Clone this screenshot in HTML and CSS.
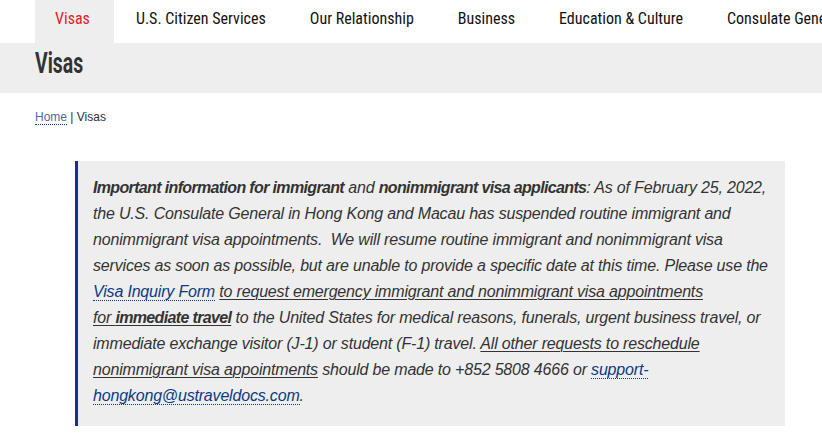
FILE: index.html
```html
<!DOCTYPE html>
<html lang="en">
<head>
    <meta charset="UTF-8">
    <meta name="viewport" content="width=device-width, initial-scale=1.0">
    <title>Visas</title>
    <link rel="stylesheet" href="styles.css">
</head>
<body>
    <nav class="main-nav">
        <a class="nav-item active" href="#">Visas</a>
        <a class="nav-item" href="#">U.S. Citizen Services</a>
        <a class="nav-item" href="#">Our Relationship</a>
        <a class="nav-item" href="#">Business</a>
        <a class="nav-item" href="#">Education &amp; Culture</a>
        <a class="nav-item" href="#">Consulate General</a>
    </nav>

    <header class="page-header">
        <h1 class="page-title">Visas</h1>
    </header>

    <div class="content">
        <p class="breadcrumb"><a href="#">Home</a> | Visas</p>

        <blockquote class="notice">
            <p><strong>Important information for immigrant</strong> and <strong>nonimmigrant visa applicants</strong>: As of February 25, 2022, the U.S. Consulate General in Hong Kong and Macau has suspended routine immigrant and nonimmigrant visa appointments.&nbsp; We will resume routine immigrant and nonimmigrant visa services as soon as possible, but are unable to provide a specific date at this time. Please use the <a class="link" href="#">Visa Inquiry Form</a> <u>to request emergency immigrant and nonimmigrant visa appointments for&nbsp;<strong>immediate travel</strong></u> to the United States for medical reasons, funerals, urgent business travel, or immediate exchange visitor (J-1) or student (F-1) travel. <u>All other requests to reschedule nonimmigrant visa appointments</u> should be made to +852 5808 4666 or <a class="link" href="#">support-hongkong@ustraveldocs.com</a>.</p>
        </blockquote>
    </div>
</body>
</html>
```

FILE: styles.css
```css
body {
    margin: 0;
    padding: 0;
    font-family: Roboto, Arial, sans-serif;
    color: #333;
    background: #fff;
    overflow: hidden;
}
.main-nav {
    display: flex;
    padding-left: 35px;
    height: 43px;
    white-space: nowrap;
    overflow: hidden;
}
.nav-item {
    display: block;
    padding: 0 22px;
    line-height: 37px;
    font-size: 16px;
    font-stretch: condensed;
    color: #111;
    text-decoration: none;
}
.nav-item.active {
    background-color: #eee;
    color: #e31c23;
    padding: 0 24px 0 20px;
}
.page-header {
    background-color: #eee;
    height: 50px;
    padding-left: 35px;
}
.page-title {
    margin: 0;
    display: inline-block;
    font-size: 29px;
    font-weight: 700;
    line-height: 40px;
    transform: scaleX(0.67);
    transform-origin: left center;
    color: #333;
}
.content {
    padding: 0 35px;
}
.breadcrumb {
    margin: 16px 0 0;
    font-family: "Liberation Sans", Arial, sans-serif;
    font-size: 12px;
    line-height: 16px;
    color: #333;
}
.breadcrumb a {
    color: #4b6aa6;
    text-decoration: none;
    border-bottom: 1px dotted #0a3a86;
}
.notice {
    margin: 36px 0 0 40px;
    width: 682px;
    padding: 14px 10px 17px 15px;
    background-color: #eee;
    border-left: 3px solid #0c3590;
}
.notice p {
    margin: 0;
    font-family: "Liberation Sans", Arial, sans-serif;
    font-size: 16px;
    line-height: 26px;
    letter-spacing: -0.18px;
    font-style: italic;
    color: #333;
}
.notice strong {
    letter-spacing: -0.65px;
}
.notice u {
    text-decoration-thickness: 1px;
    text-underline-offset: 2px;
}
.link {
    color: #0a3a86;
    text-decoration: none;
    border-bottom: 1px dotted #0a3a86;
}
```
